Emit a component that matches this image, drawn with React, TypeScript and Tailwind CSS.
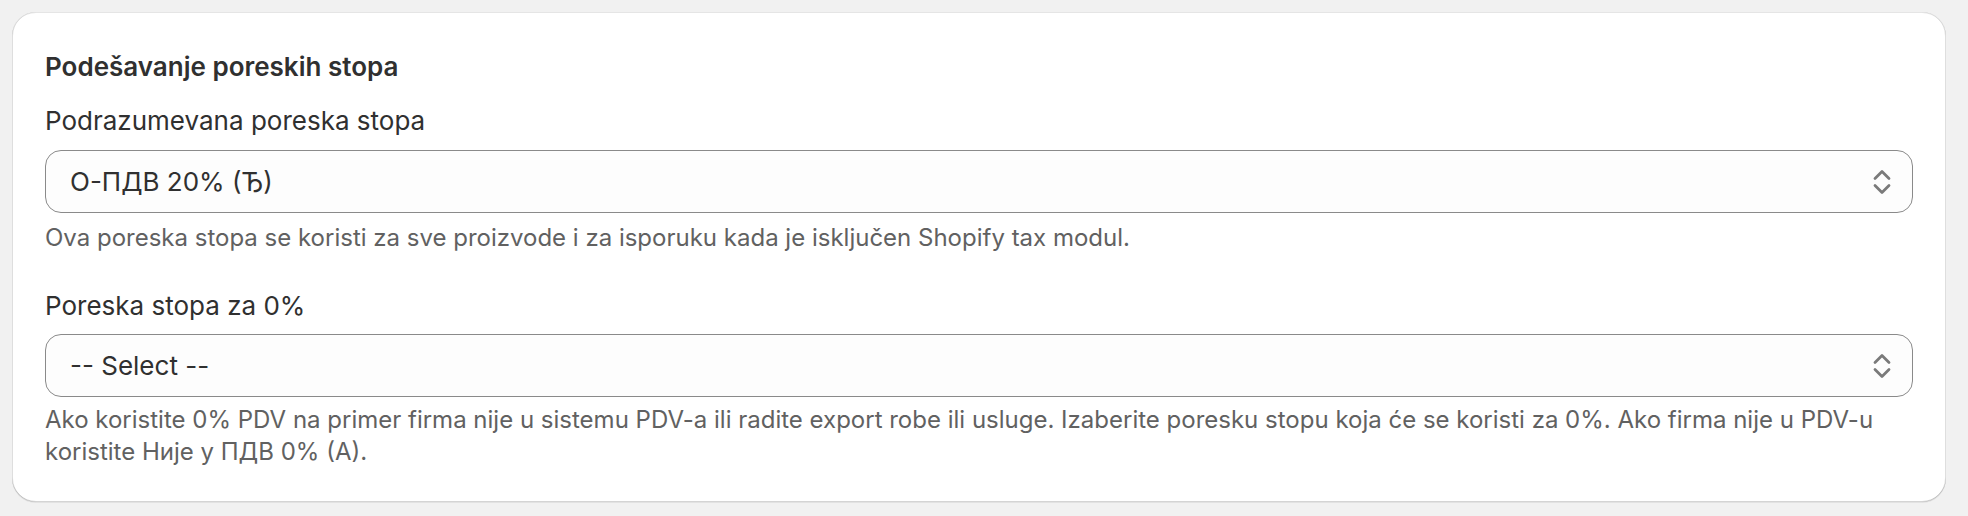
import React from "react";

function SelectChevrons() {
  return (
    <svg width="20" height="28" viewBox="0 0 20 28" fill="none" className="shrink-0">
      <polyline points="3,10.5 10,3.5 17,10.5" stroke="#7a7a7a" strokeWidth="2.8" strokeLinecap="round" strokeLinejoin="round" />
      <polyline points="3,17.5 10,24.5 17,17.5" stroke="#7a7a7a" strokeWidth="2.8" strokeLinecap="round" strokeLinejoin="round" />
    </svg>
  );
}

function FakeSelect({ value }: { value: string }) {
  return (
    <div className="flex h-[63px] items-center justify-between rounded-[16px] border border-[#8a8a8a] bg-[#fdfdfd] pl-[24px] pr-[20px]">
      <span className="text-[26px] leading-[40px] text-[#303030]">{value}</span>
      <SelectChevrons />
    </div>
  );
}

export default function App() {
  return (
    <div
      className="h-[516px] w-full overflow-hidden bg-[#f1f1f1] pt-3 pl-3 pr-[22px]"
      style={{ fontFamily: "Inter, 'Noto Sans', sans-serif" }}
    >
      <div className="rounded-[24px] bg-white px-[33px] pt-[35px] pb-[34px] shadow-[0_1px_0_0_rgba(26,26,26,0.07),inset_0_1px_0_0_rgba(204,204,204,0.5),inset_0_-1px_0_0_rgba(0,0,0,0.17),inset_1px_0_0_0_rgba(0,0,0,0.13),inset_-1px_0_0_0_rgba(0,0,0,0.13)]">
        <h2 className="text-[26px] font-semibold leading-[40px] text-[#303030]">Podešavanje poreskih stopa</h2>

        <div className="mt-[14px] text-[26px] leading-[40px] text-[#303030]">Podrazumevana poreska stopa</div>
        <div className="mt-[9px]">
          <FakeSelect value="О-ПДВ 20% (Ђ)" />
        </div>
        <p className="mt-[9px] text-[24px] leading-[32px] text-[#616161]">
          Ova poreska stopa se koristi za sve proizvode i za isporuku kada je isključen Shopify tax modul.
        </p>

        <div className="mt-[32px] text-[26px] leading-[40px] text-[#303030]">Poreska stopa za 0%</div>
        <div className="mt-[8px]">
          <FakeSelect value="-- Select --" />
        </div>
        <p className="mt-[7px] text-[24px] leading-[32px] text-[#616161]">
          Ako koristite 0% PDV na primer firma nije u sistemu PDV-a ili radite export robe ili usluge. Izaberite poresku stopu koja će se koristi za 0%. Ako firma nije u PDV-u koristite Није у ПДВ 0% (А).
        </p>
      </div>
    </div>
  );
}
